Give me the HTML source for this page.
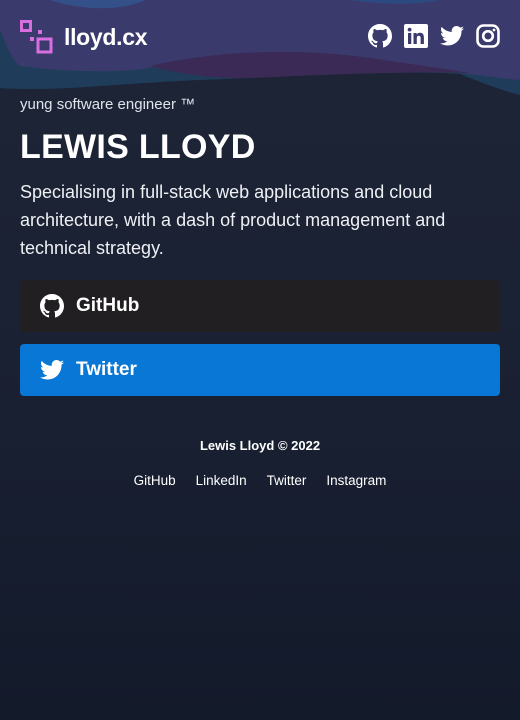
<!DOCTYPE html>
<html><head><meta charset="utf-8"><style>
*{margin:0;padding:0;box-sizing:border-box}
body{width:520px;height:720px;overflow:hidden;font-family:"Liberation Sans",sans-serif;color:#fff;background:linear-gradient(#1e2537 0%,#1a2133 50%,#131a2a 100%);position:relative}
.bg{position:absolute;left:0;top:0}
.abs{position:absolute}
.brand{left:64px;top:24px;font-size:23px;font-weight:bold;letter-spacing:-0.3px}
.tag{left:20px;top:96px;font-size:15px;color:#e0e4ec}
h1{position:absolute;left:20px;top:128px;font-size:34px;font-weight:900;letter-spacing:0.3px}
.desc{left:20px;top:178px;width:480px;font-size:18px;line-height:28px;color:#eef0f4}
.btn{position:absolute;left:20px;width:480px;height:52px;border-radius:4px;display:flex;align-items:center;padding-left:20px;font-size:19px;font-weight:bold}
.btn svg{margin-right:12px}
.foot{left:0;width:520px;text-align:center;font-size:13px}
.links{left:0;width:520px;top:473px;text-align:center;font-size:13.5px}
.links span{margin:0 10px}
</style></head><body>
<svg class="bg" width="520" height="110" viewBox="0 0 520 110">
<path d="M0 0H520V95C500 90 480 82 460 74C400 70 300 76 200 80C120 83 60 92 0 88Z" fill="#1f3d5b"/>
<path d="M60 0H520V80C470 75 420 67 370 60C300 52 230 52 160 66C120 74 70 72 20 66C10 58 5 40 0 30V0Z" fill="#3b3a6d"/>
<path d="M50 0C80 10 120 12 145 0Z" fill="#335089"/>
<path d="M350 0C380 5 420 5 440 0Z" fill="#2d4a80"/>
<path d="M150 66C220 50 300 48 370 58C410 64 440 68 470 73C400 71 320 75 250 78C210 79 180 74 150 66Z" fill="#3a2a55"/>
</svg>
<svg class="abs" style="left:20px;top:20px" width="34" height="34" viewBox="0 0 34 34">
<rect x="1.5" y="1.5" width="9" height="9" fill="none" stroke="#d86ee0" stroke-width="3"/>
<rect x="10" y="17" width="4" height="4" fill="#d86ee0"/>
<rect x="18" y="10" width="4" height="4" fill="#d86ee0"/>
<rect x="18" y="19" width="13" height="13" fill="none" stroke="#d86ee0" stroke-width="3"/>
</svg>
<div class="abs brand">lloyd.cx</div>
<svg class="abs" style="left:368px;top:24px" width="24" height="24" viewBox="0 0 16 16"><path fill="#fff" d="M8 0C3.58 0 0 3.58 0 8c0 3.54 2.29 6.53 5.47 7.59.4.07.55-.17.55-.38v-1.33c-2.23.48-2.7-1.07-2.7-1.07-.36-.92-.89-1.17-.89-1.17-.73-.5.06-.49.06-.49.8.06 1.23.83 1.23.83.71 1.22 1.87.87 2.33.66.07-.52.28-.87.51-1.07-1.78-.2-3.64-.89-3.64-3.95 0-.87.31-1.59.82-2.15-.08-.2-.36-1.02.08-2.12 0 0 .67-.21 2.2.82.64-.18 1.32-.27 2-.27.68 0 1.36.09 2 .27 1.53-1.04 2.2-.82 2.2-.82.44 1.1.16 1.92.08 2.12.51.56.82 1.27.82 2.15 0 3.07-1.87 3.75-3.65 3.95.29.25.54.73.54 1.48v2.2c0 .21.15.46.55.38A8.01 8.01 0 0016 8c0-4.42-3.58-8-8-8z"/></svg>
<svg class="abs" style="left:404px;top:24px" width="24" height="24" viewBox="0 0 24 24"><rect width="24" height="24" rx="2" fill="#fff"/><rect x="4" y="9" width="3.3" height="11" fill="#3b3a6d"/><circle cx="5.6" cy="5.6" r="1.9" fill="#3b3a6d"/><path d="M9.5 9h3.1v1.6c.5-.9 1.6-1.8 3.3-1.8 3.4 0 4 2.2 4 5.1V20h-3.3v-5.4c0-1.3 0-2.9-1.8-2.9s-2 1.4-2 2.8V20H9.5z" fill="#3b3a6d"/></svg>
<svg class="abs" style="left:440px;top:25px" width="24" height="22" viewBox="0 0 24 20"><path fill="#fff" d="M24 2.4a9.8 9.8 0 01-2.8.8A4.9 4.9 0 0023.3.4a9.9 9.9 0 01-3.1 1.2A4.9 4.9 0 0011.8 6 14 14 0 011.7.9a4.9 4.9 0 001.5 6.6A4.9 4.9 0 011 6.9v.1a4.9 4.9 0 003.9 4.8 4.9 4.9 0 01-2.2.1 4.9 4.9 0 004.6 3.4A9.9 9.9 0 010 17.3 14 14 0 007.5 19.5c9.1 0 14-7.5 14-14v-.6A10 10 0 0024 2.4z"/></svg>
<svg class="abs" style="left:476px;top:24px" width="24" height="24" viewBox="0 0 24 24"><rect x="1.5" y="1.5" width="21" height="21" rx="6" fill="none" stroke="#fff" stroke-width="2.6"/><circle cx="12" cy="12" r="4.8" fill="none" stroke="#fff" stroke-width="2.6"/><circle cx="18" cy="6" r="1.4" fill="#fff"/></svg>
<div class="abs tag">yung software engineer ™</div>
<h1>LEWIS LLOYD</h1>
<div class="abs desc">Specialising in full-stack web applications and cloud architecture, with a dash of product management and technical strategy.</div>
<div class="btn" style="top:280px;background:#211f21"><svg width="24" height="24" viewBox="0 0 16 16"><path fill="#fff" d="M8 0C3.58 0 0 3.58 0 8c0 3.54 2.29 6.53 5.47 7.59.4.07.55-.17.55-.38v-1.33c-2.23.48-2.7-1.07-2.7-1.07-.36-.92-.89-1.17-.89-1.17-.73-.5.06-.49.06-.49.8.06 1.23.83 1.23.83.71 1.22 1.87.87 2.33.66.07-.52.28-.87.51-1.07-1.78-.2-3.64-.89-3.64-3.95 0-.87.31-1.59.82-2.15-.08-.2-.36-1.02.08-2.12 0 0 .67-.21 2.2.82.64-.18 1.32-.27 2-.27.68 0 1.36.09 2 .27 1.53-1.04 2.2-.82 2.2-.82.44 1.1.16 1.92.08 2.12.51.56.82 1.27.82 2.15 0 3.07-1.87 3.75-3.65 3.95.29.25.54.73.54 1.48v2.2c0 .21.15.46.55.38A8.01 8.01 0 0016 8c0-4.42-3.58-8-8-8z"/></svg>GitHub</div>
<div class="btn" style="top:344px;background:#0877d6"><svg width="24" height="22" viewBox="0 0 24 20"><path fill="#fff" d="M24 2.4a9.8 9.8 0 01-2.8.8A4.9 4.9 0 0023.3.4a9.9 9.9 0 01-3.1 1.2A4.9 4.9 0 0011.8 6 14 14 0 011.7.9a4.9 4.9 0 001.5 6.6A4.9 4.9 0 011 6.9v.1a4.9 4.9 0 003.9 4.8 4.9 4.9 0 01-2.2.1 4.9 4.9 0 004.6 3.4A9.9 9.9 0 010 17.3 14 14 0 007.5 19.5c9.1 0 14-7.5 14-14v-.6A10 10 0 0024 2.4z"/></svg>Twitter</div>
<div class="abs foot" style="top:438px;font-weight:bold">Lewis Lloyd © 2022</div>
<div class="abs links"><span>GitHub</span><span>LinkedIn</span><span>Twitter</span><span>Instagram</span></div>
</body></html>
